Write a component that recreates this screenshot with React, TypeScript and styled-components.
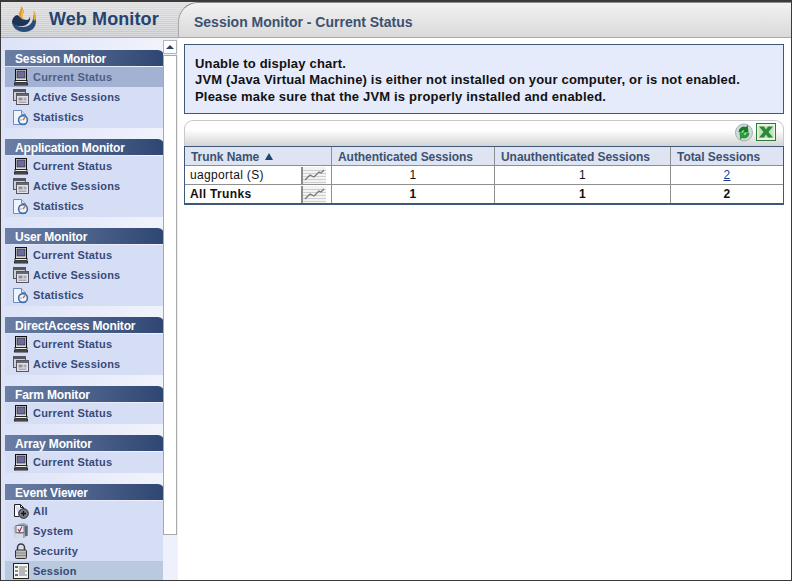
import styled, { createGlobalStyle } from "styled-components";

const GlobalStyle = createGlobalStyle`
	html, body {
		margin: 0;
		padding: 0;
		background: #ffffff;
	}
	* {
		box-sizing: border-box;
	}
`;

const Page = styled.div`
	width: 792px;
	height: 581px;
	overflow: hidden;
	display: flex;
	flex-direction: column;
	border: 1px solid #3a3a3a;
	border-top-width: 2px;
	font-family: "Liberation Sans", Arial, sans-serif;
	background: #ffffff;
`;

const Header = styled.div`
	display: flex;
	height: 36px;
	flex: none;
	background: repeating-linear-gradient(
			180deg,
			rgba(255, 255, 255, 0.35) 0px,
			rgba(255, 255, 255, 0.35) 1px,
			transparent 1px,
			transparent 2px
		),
		linear-gradient(180deg, #dcdcde 0%, #c6c7cb 100%);
	border-bottom: 1px solid #a9a9ad;
`;

const Brand = styled.div`
	width: 177px;
	flex: none;
	display: flex;
	align-items: center;
	padding-left: 9px;
	gap: 9px;
`;

const BrandName = styled.span`
	font-size: 18px;
	font-weight: bold;
	letter-spacing: 0.1px;
	color: #24446f;
`;

const TitleBar = styled.div`
	flex: 1;
	display: flex;
	align-items: center;
	padding: 4px 0 0 15px;
	border-top: 1px solid #8f8f92;
	border-left: 1px solid #a8a8aa;
	border-top-left-radius: 20px;
	background: linear-gradient(180deg, #f2f2f2 0%, #d9d9d9 100%);
`;

const Title = styled.h1`
	margin: 0;
	font-size: 14px;
	font-weight: bold;
	color: #3c5170;
`;

const Body = styled.div`
	flex: 1;
	display: flex;
	min-height: 0;
`;

const Sidebar = styled.div`
	width: 177px;
	flex: none;
	display: flex;
	background: linear-gradient(90deg, #dde3f8 0%, #f3f4fc 100%);
`;

const Nav = styled.nav`
	width: 162px;
	flex: none;
	padding: 12px 0 0 4px;
	display: flex;
	flex-direction: column;
	gap: 11px;
`;

const Group = styled.section`
	display: flex;
	flex-direction: column;
`;

const GroupTitle = styled.div`
	height: 16px;
	margin-right: -1px;
	padding: 2px 0 0 10px;
	display: flex;
	align-items: center;
	font-size: 12px;
	font-weight: bold;
	letter-spacing: -0.15px;
	color: #ffffff;
	border-top-right-radius: 6px;
	background: linear-gradient(90deg, #6b7fa5 0%, #2e4672 100%);
`;

const GroupItems = styled.div`
	margin-top: 1px;
	background: #d6def6;
	display: flex;
	flex-direction: column;
	padding-bottom: 1px;
`;

const Item = styled.div<{ $active?: "blue" | "grey" }>`
	height: 20px;
	display: flex;
	align-items: center;
	gap: 4px;
	padding-left: 8px;
	font-size: 11px;
	font-weight: bold;
	letter-spacing: 0.2px;
	color: ${(p) => (p.$active === "blue" ? "#4c5f85" : "#364b78")};
	background: ${(p) =>
		p.$active === "blue"
			? "#a3b1d2"
			: p.$active === "grey"
				? "#b9c9de"
				: "transparent"};
`;

const Scrollbar = styled.div`
	width: 15px;
	flex: none;
	padding-top: 2px;
	display: flex;
	flex-direction: column;
	gap: 1px;
	background: #eef0fb;
`;

const ScrollButton = styled.div`
	width: 14px;
	height: 14px;
	display: flex;
	align-items: center;
	justify-content: center;
	background: #ffffff;
	border: 1px solid #b5b5b5;
	&::before {
		content: "";
		border-left: 4px solid transparent;
		border-right: 4px solid transparent;
		border-bottom: 4px solid #24446f;
	}
`;

const ScrollThumb = styled.div`
	width: 14px;
	height: 480px;
	background: #ffffff;
	border: 1px solid #a8a8a8;
`;

const Main = styled.main`
	flex: 1;
	padding: 6px 7px 0 6px;
	display: flex;
	flex-direction: column;
`;

const Message = styled.div`
	height: 70px;
	padding: 11px 10px 0;
	background: #e6ebfb;
	border: 1px solid #3e5878;
	font-size: 13px;
	font-weight: bold;
	line-height: 16.4px;
	letter-spacing: 0.18px;
	color: #111111;
`;

const Toolbar = styled.div`
	margin-top: 6px;
	height: 26px;
	padding: 0 7px 3px 0;
	display: flex;
	align-items: center;
	justify-content: flex-end;
	gap: 3px;
	border: 1px solid #c8c8c8;
	border-bottom: none;
	border-radius: 9px 9px 0 0;
	background: linear-gradient(180deg, #ffffff 0%, #ffffff 35%, #d4d4d4 100%);
`;

const Table = styled.div`
	display: grid;
	grid-template-columns: 146px 162px 175px 1fr;
	border: 2px solid #3e5878;
	border-top-width: 1px;
	border-right-width: 1px;
	border-left-width: 1px;
	background: #8f8f8f;
	gap: 1px;
`;

const HeadCell = styled.div`
	height: 18px;
	display: flex;
	align-items: center;
	gap: 6px;
	padding: 1px 0 0 6px;
	background: #dfe4f2;
	font-size: 12px;
	font-weight: bold;
	letter-spacing: -0.05px;
	color: #3c5170;
`;

const Cell = styled.div<{ $left?: boolean; $bold?: boolean }>`
	height: 18px;
	display: flex;
	align-items: center;
	justify-content: ${(p) => (p.$left ? "space-between" : "center")};
	padding: ${(p) => (p.$left ? "0 5px 0 5px" : "0")};
	background: #ffffff;
	font-size: 12px;
	letter-spacing: 0.35px;
	font-weight: ${(p) => (p.$bold ? "bold" : "normal")};
	color: #111111;
`;

const CountLink = styled.a`
	color: #1c3f94;
	text-decoration: underline;
`;

const SortArrow = styled.span`
	width: 0;
	height: 0;
	border-left: 4px solid transparent;
	border-right: 4px solid transparent;
	border-bottom: 7px solid #1e4470;
`;

const Logo = () => (
	<svg width="30" height="30" viewBox="0 0 30 30">
		<path d="M2 16c0 7 6 11 12 11 7 0 12-4 12-11 0-2-1-4-3-6 1 8-4 12-10 12-5 0-9-2-11-6z" fill="#2a4a78" />
		<path d="M2 17c0-3 2-6 5-7 3 1 6 5 9 5 3 0 4-2 4-4 1 5-2 9-7 10-5 1-10-1-11-4z" fill="#1d3358" />
		<path d="M11 1c2 3 4 5 2 8-1 2-1 4 1 6-3-1-6-4-5-7 1-2 2-4 2-7z" fill="#e39a23" />
		<path d="M12 4c1 2 1 4 0 6 0 1 0 2 1 3-2-1-2-4-1-6z" fill="#f5d678" />
		<path d="M23 5c3 3 4 7 2 11-1-1-2-2-2-4 1-2 1-5 0-7z" fill="#e8a530" />
	</svg>
);

const MonitorIcon = () => (
	<svg width="16" height="17" viewBox="0 0 16 17">
		<rect x="2.500" y="0.500" width="11" height="11" fill="#dcdcdc" stroke="#111" />
		<rect x="4" y="2" width="8" height="7" fill="#6a6a9c" stroke="#222" strokeWidth="0.600" />
		<rect x="2" y="11.500" width="12" height="2" fill="#f0f0f0" stroke="#111" strokeWidth="0.800" />
		<rect x="1" y="14" width="14" height="2.500" fill="#2a2a2a" />
		<path d="M2 15h12" stroke="#9a9a9a" strokeWidth="0.500" />
	</svg>
);

const WindowIcon = () => (
	<svg width="16" height="16" viewBox="0 0 16 16">
		<rect x="0.500" y="0.500" width="12" height="11" fill="#cfcfd6" stroke="#55555f" />
		<rect x="1" y="1" width="11" height="2" fill="#55555f" />
		<rect x="3.500" y="4.500" width="12" height="11" fill="#e2e2e8" stroke="#55555f" />
		<rect x="4" y="5" width="11" height="2" fill="#686873" />
		<rect x="5.500" y="8.500" width="4" height="3" fill="#8f8f99" />
		<rect x="10.500" y="8.500" width="3" height="3" fill="#a9a9b3" />
		<rect x="5.500" y="12.500" width="8" height="1.500" fill="#a9a9b3" />
	</svg>
);

const StatsIcon = () => (
	<svg width="16" height="17" viewBox="0 0 16 17">
		<path d="M0.500 1.500h8l4 4v10h-12z" fill="#f0f5fd" stroke="#6a8cc0" />
		<path d="M8.500 1.500v4h4" fill="#cfdff4" stroke="#6a8cc0" />
		<circle cx="10" cy="11" r="5.200" fill="#3f6ea8" />
		<circle cx="10" cy="11" r="3.600" fill="#f2f5fa" />
		<path d="M10 11l2-2.500" stroke="#d06a20" strokeWidth="1.300" />
		<path d="M7.500 11h1" stroke="#3a5f96" />
	</svg>
);

const AllIcon = () => (
	<svg width="16" height="16" viewBox="0 0 16 16">
		<path d="M1.500 1.500h6l3 3v2.500M6 13.500H1.500v-12" fill="#ffffff" stroke="#222" />
		<path d="M7.500 1.500v3h3" fill="none" stroke="#222" />
		<circle cx="10.500" cy="10.500" r="4.800" fill="#767b88" stroke="#222" />
		<path d="M8 10.500h5M10.500 8v5" stroke="#111" strokeWidth="1.300" />
	</svg>
);

const SystemIcon = () => (
	<svg width="16" height="17" viewBox="0 0 16 17">
		<path d="M0 4l6-3v14l-4-1z" fill="#c2c4cc" />
		<path d="M5 1l6-1 4 2v10l-4 3H5z" fill="#9fa3b2" />
		<rect x="3" y="2.500" width="8" height="7" fill="#e6ecf8" stroke="#6c7488" />
		<path d="M5 6l1.500 2.500L9 3.500" stroke="#a83028" strokeWidth="1.100" fill="none" />
		<rect x="12" y="3" width="2.500" height="10" fill="#5f6676" />
		<path d="M2 11h8v4H3z" fill="#d9dbe0" />
	</svg>
);

const LockIcon = () => (
	<svg width="16" height="16" viewBox="0 0 16 16">
		<path d="M4.500 7V4.500a3.500 3.500 0 0 1 7 0V7" fill="none" stroke="#3a3a3a" strokeWidth="1.500" />
		<rect x="2.500" y="7" width="11" height="8.500" rx="1" fill="#bdbdbd" stroke="#333" />
		<path d="M3 10h10M3 12.500h10" stroke="#868686" />
	</svg>
);

const SessionIcon = () => (
	<svg width="16" height="16" viewBox="0 0 16 16">
		<rect x="0.500" y="0.500" width="15" height="15" fill="#f4f4f4" stroke="#222" />
		<rect x="2" y="3" width="3" height="2" fill="#5d7d58" />
		<rect x="2" y="7" width="3" height="2" fill="#b98a44" />
		<rect x="2" y="11" width="3" height="2" fill="#5a6f9a" />
		<path d="M6 4h8M6 6h6M6 8h8M6 10h6M6 12h8" stroke="#7a7a7a" />
	</svg>
);

const ChartIcon = () => (
	<svg width="25" height="17" viewBox="0 0 25 17">
		<rect width="25" height="17" fill="#f3f3f3" />
		<path d="M0 3.500h25M0 6.500h25M0 9.500h25M0 12.500h25M0 15.500h25" stroke="#cfcfcf" />
		<path d="M1 0v17" stroke="#8c8c8c" strokeWidth="2" />
		<path d="M4 13l5-5 4 2 5-5 2 1 3-3" fill="none" stroke="#777777" strokeWidth="1.300" />
	</svg>
);

const RefreshIcon = () => (
	<svg width="18" height="19" viewBox="0 0 18 19">
		<circle cx="9" cy="9.500" r="8.500" fill="#d3dade" stroke="#a5adb2" />
		<path d="M3.500 9a5.500 5.500 0 0 1 7.500-5L12.800 2l.7 7.500H7.500l2-2.200C7.800 6.800 6.500 8 6.500 9.500z" fill="#157f24" />
		<path d="M14.500 10a5.500 5.500 0 0 1-7.500 5l-1.800 2-.7-7.500h6l-2 2.200c1.700.5 3-.7 3-2.200z" fill="#2a9c35" />
	</svg>
);

const ExcelIcon = () => (
	<svg width="20" height="18" viewBox="0 0 20 18">
		<rect x="0.500" y="0.500" width="19" height="17" fill="#e8f3e4" stroke="#2f7a35" />
		<rect x="2.500" y="3" width="15" height="12" fill="#c5e2bb" />
		<path d="M3 3.500h5l2 3 2-3h5l-4.500 5.500 4.500 5.500h-5l-2-3-2 3H3l4.500-5.500z" fill="#2a8a3a" />
	</svg>
);

const itemIcons = {
	monitor: <MonitorIcon />,
	window: <WindowIcon />,
	stats: <StatsIcon />,
	all: <AllIcon />,
	system: <SystemIcon />,
	lock: <LockIcon />,
	session: <SessionIcon />,
};

type NavItem = {
	label: string;
	icon: keyof typeof itemIcons;
	active?: "blue" | "grey";
};

const monitorItems: NavItem[] = [
	{ label: "Current Status", icon: "monitor" },
	{ label: "Active Sessions", icon: "window" },
	{ label: "Statistics", icon: "stats" },
];

const groups: { title: string; items: NavItem[] }[] = [
	{
		title: "Session Monitor",
		items: [
			{ label: "Current Status", icon: "monitor", active: "blue" },
			{ label: "Active Sessions", icon: "window" },
			{ label: "Statistics", icon: "stats" },
		],
	},
	{ title: "Application Monitor", items: monitorItems },
	{ title: "User Monitor", items: monitorItems },
	{ title: "DirectAccess Monitor", items: monitorItems.slice(0, 2) },
	{ title: "Farm Monitor", items: monitorItems.slice(0, 1) },
	{ title: "Array Monitor", items: monitorItems.slice(0, 1) },
	{
		title: "Event Viewer",
		items: [
			{ label: "All", icon: "all" },
			{ label: "System", icon: "system" },
			{ label: "Security", icon: "lock" },
			{ label: "Session", icon: "session", active: "grey" },
		],
	},
];

const App = (): JSX.Element => (
	<>
		<GlobalStyle />
		<Page>
			<Header>
				<Brand>
					<Logo />
					<BrandName>Web Monitor</BrandName>
				</Brand>
				<TitleBar>
					<Title>Session Monitor - Current Status</Title>
				</TitleBar>
			</Header>
			<Body>
				<Sidebar>
					<Nav>
						{groups.map((group) => (
							<Group key={group.title}>
								<GroupTitle>{group.title}</GroupTitle>
								<GroupItems>
									{group.items.map((item) => (
										<Item key={item.label} $active={item.active}>
											{itemIcons[item.icon]}
											{item.label}
										</Item>
									))}
								</GroupItems>
							</Group>
						))}
					</Nav>
					<Scrollbar>
						<ScrollButton />
						<ScrollThumb />
					</Scrollbar>
				</Sidebar>
				<Main>
					<Message>
						Unable to display chart.
						<br />
						JVM (Java Virtual Machine) is either not installed on your computer,
						or is not enabled.
						<br />
						Please make sure that the JVM is properly installed and enabled.
					</Message>
					<Toolbar>
						<RefreshIcon />
						<ExcelIcon />
					</Toolbar>
					<Table>
						<HeadCell>
							Trunk Name <SortArrow />
						</HeadCell>
						<HeadCell>Authenticated Sessions</HeadCell>
						<HeadCell>Unauthenticated Sessions</HeadCell>
						<HeadCell>Total Sessions</HeadCell>
						<Cell $left>
							uagportal (S) <ChartIcon />
						</Cell>
						<Cell>1</Cell>
						<Cell>1</Cell>
						<Cell>
							<CountLink href="#">2</CountLink>
						</Cell>
						<Cell $left $bold>
							All Trunks <ChartIcon />
						</Cell>
						<Cell $bold>1</Cell>
						<Cell $bold>1</Cell>
						<Cell $bold>2</Cell>
					</Table>
				</Main>
			</Body>
		</Page>
	</>
);

export default App;
